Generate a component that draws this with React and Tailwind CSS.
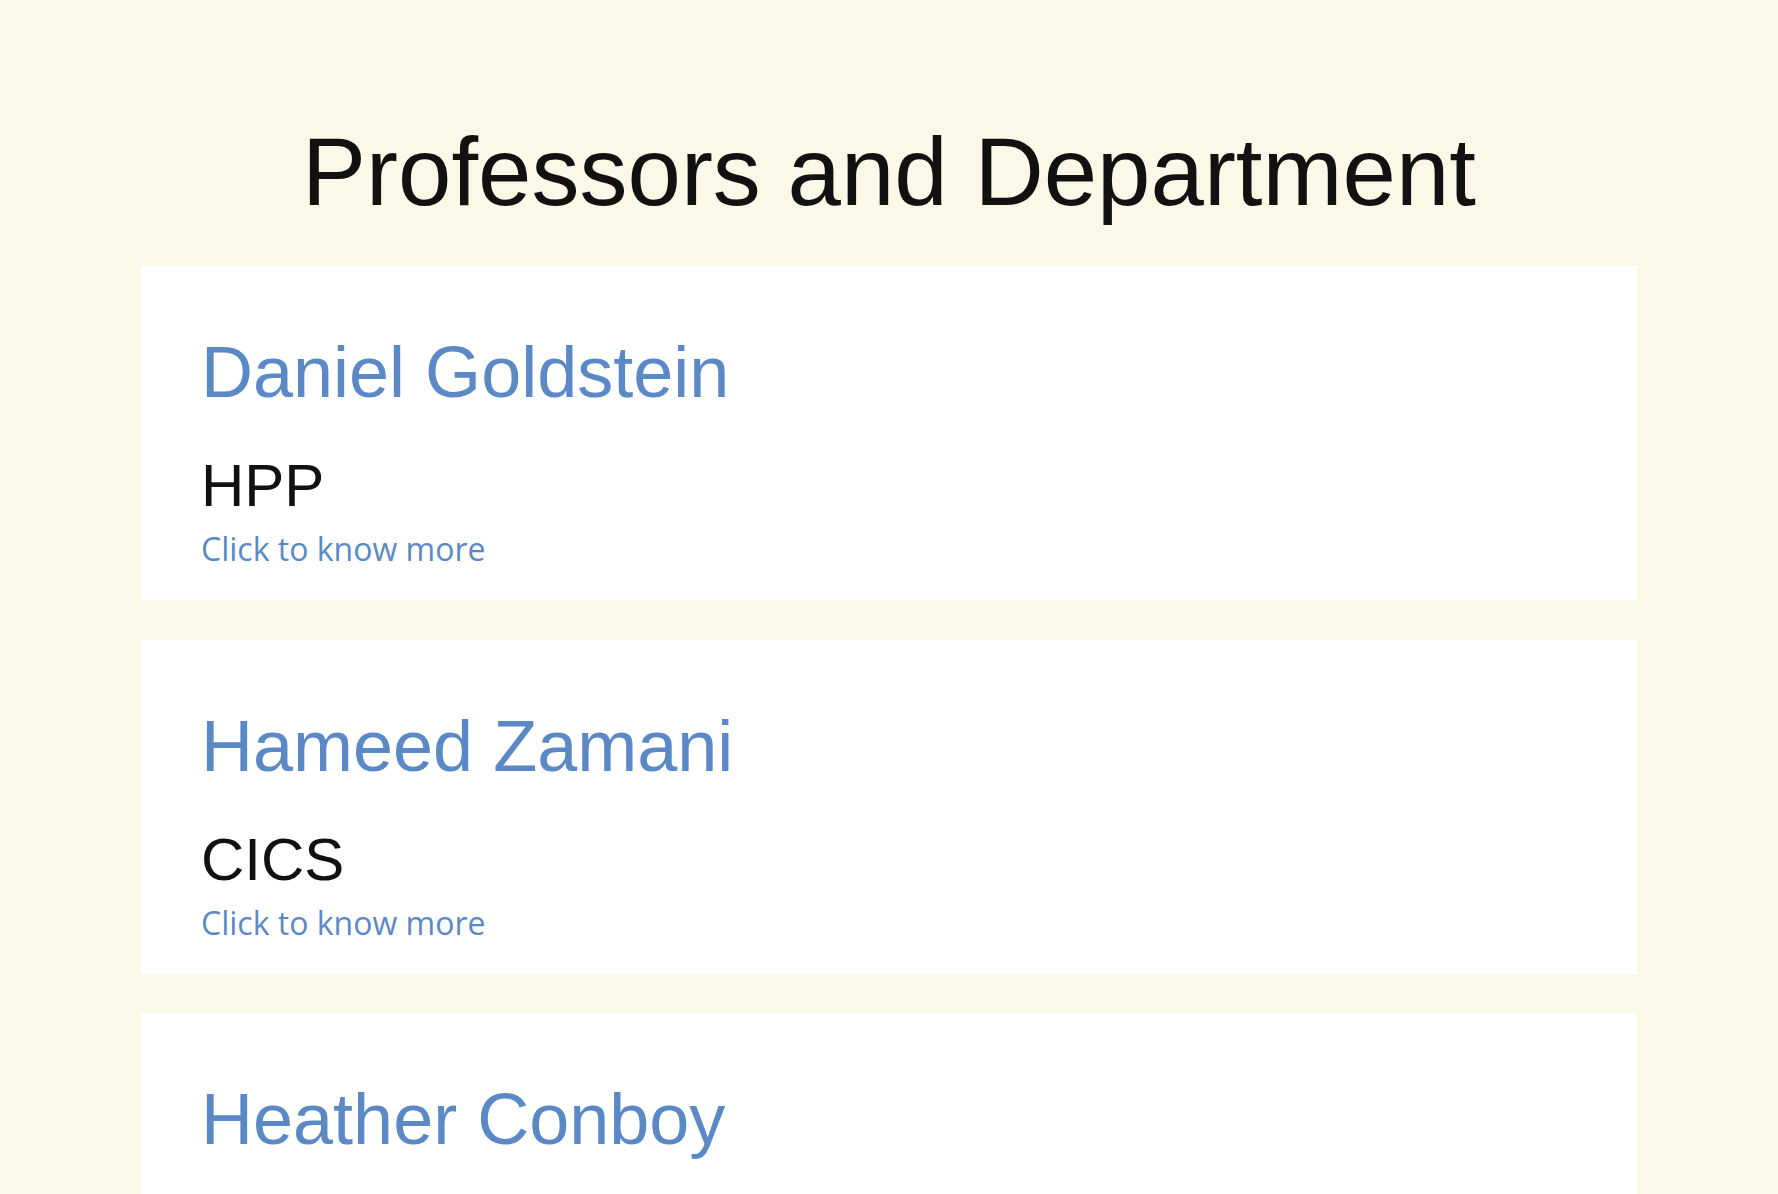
import React from "react";

const PROFESSORS = [
    { name: "Daniel Goldstein", department: "HPP" },
    { name: "Hameed Zamani", department: "CICS" },
    { name: "Heather Conboy", department: "CICS" },
];

function ProfessorCard({ professor }) {
    return (
        <div className="bg-white pt-[70px] pb-[35px] pl-[60px] pr-[60px]">
            <h2 className="text-[72px] leading-none font-normal text-[#5b89c5] mb-[48px]">{professor.name}</h2>
            <p className="text-[60px] leading-none text-[#111111] mb-[17px]">{professor.department}</p>
            <a href="#" className="block text-[32px] leading-none text-[#5b89c5] font-['Open_Sans',sans-serif]">
                Click to know more
            </a>
        </div>
    );
}

export default function App() {
    return (
        <div className="min-h-screen bg-[#fcf8e8] font-['Liberation_Sans',Arial,sans-serif] pt-[124px] pb-10">
            <h1 className="text-[96px] leading-none font-normal text-center text-[#111111] mb-[46px]">
                Professors and Department
            </h1>
            <div className="w-[1496px] mx-auto flex flex-col gap-[39.5px]">
                {PROFESSORS.map((p) => (
                    <ProfessorCard key={p.name} professor={p} />
                ))}
            </div>
        </div>
    );
}
